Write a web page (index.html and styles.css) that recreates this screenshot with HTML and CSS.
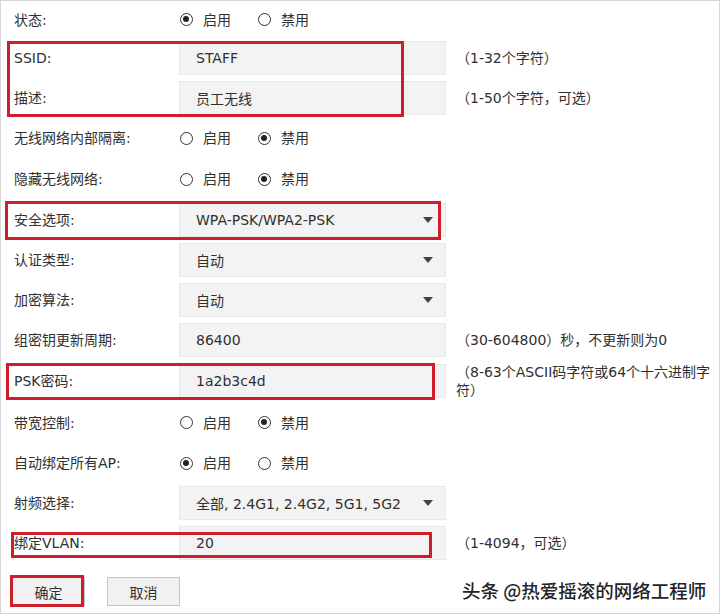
FILE: index.html
```html
<!DOCTYPE html>
<html lang="zh-CN">
<head>
<meta charset="utf-8">
<title>无线网络设置</title>
<link rel="stylesheet" href="styles.css">
</head>
<body>
<div class="page">
  <div class="form">
    <div class="row row-first">
      <div class="label">状态:</div>
      <div class="radios">
        <span class="radio on"></span><span class="opt">启用</span>
        <span class="radio"></span><span class="opt">禁用</span>
      </div>
    </div>
    <div class="row">
      <div class="label">SSID:</div>
      <div class="field">STAFF</div>
      <div class="hint">（1-32个字符）</div>
    </div>
    <div class="row">
      <div class="label">描述:</div>
      <div class="field">员工无线</div>
      <div class="hint">（1-50个字符，可选）</div>
    </div>
    <div class="row">
      <div class="label">无线网络内部隔离:</div>
      <div class="radios">
        <span class="radio"></span><span class="opt">启用</span>
        <span class="radio on"></span><span class="opt">禁用</span>
      </div>
    </div>
    <div class="row row-tall">
      <div class="label">隐藏无线网络:</div>
      <div class="radios">
        <span class="radio"></span><span class="opt">启用</span>
        <span class="radio on"></span><span class="opt">禁用</span>
      </div>
    </div>
    <div class="row">
      <div class="label">安全选项:</div>
      <div class="field select">WPA-PSK/WPA2-PSK<svg class="caret" width="10" height="6" viewBox="0 0 10 6"><path d="M0 0H10L5 6Z"/></svg></div>
    </div>
    <div class="row">
      <div class="label">认证类型:</div>
      <div class="field select">自动<svg class="caret" width="10" height="6" viewBox="0 0 10 6"><path d="M0 0H10L5 6Z"/></svg></div>
    </div>
    <div class="row">
      <div class="label">加密算法:</div>
      <div class="field select">自动<svg class="caret" width="10" height="6" viewBox="0 0 10 6"><path d="M0 0H10L5 6Z"/></svg></div>
    </div>
    <div class="row">
      <div class="label">组密钥更新周期:</div>
      <div class="field">86400</div>
      <div class="hint">（30-604800）秒，不更新则为0</div>
    </div>
    <div class="row row-tall">
      <div class="label">PSK密码:</div>
      <div class="field">1a2b3c4d</div>
      <div class="hint hint-wrap">（8-63个ASCII码字符或64个十六进制字符）</div>
    </div>
    <div class="row row-mid">
      <div class="label">带宽控制:</div>
      <div class="radios">
        <span class="radio"></span><span class="opt">启用</span>
        <span class="radio on"></span><span class="opt">禁用</span>
      </div>
    </div>
    <div class="row">
      <div class="label">自动绑定所有AP:</div>
      <div class="radios">
        <span class="radio on"></span><span class="opt">启用</span>
        <span class="radio"></span><span class="opt">禁用</span>
      </div>
    </div>
    <div class="row">
      <div class="label">射频选择:</div>
      <div class="field select">全部, 2.4G1, 2.4G2, 5G1, 5G2<svg class="caret" width="10" height="6" viewBox="0 0 10 6"><path d="M0 0H10L5 6Z"/></svg></div>
    </div>
    <div class="row">
      <div class="label">绑定VLAN:</div>
      <div class="field">20</div>
      <div class="hint">（1-4094，可选）</div>
    </div>
  </div>
  <div class="actions">
    <button class="btn btn-ok">确定</button>
    <button class="btn btn-cancel">取消</button>
  </div>

  <div class="mark mark-ssid"></div>
  <div class="mark mark-sec"></div>
  <div class="mark mark-psk"></div>
  <div class="mark mark-vlan"></div>
  <div class="mark mark-ok"></div>

  <div class="watermark">头条 @热爱摇滚的网络工程师</div>
</div>
</body>
</html>
```
FILE: styles.css
```css
* { box-sizing: border-box; }
html, body {
  margin: 0;
  padding: 0;
  background: #fff;
}
.page {
  position: relative;
  width: 720px;
  height: 614px;
  overflow: hidden;
  box-shadow: inset 0 0 0 1px #d6d6d6;
  font-family: "DejaVu Sans", "Noto Sans CJK SC", sans-serif;
  font-size: 14px;
  color: #303030;
  text-spacing-trim: space-all;
}
.form {
  padding: 1px 0 0 14px;
}
.row {
  display: grid;
  grid-template-columns: 165px 267px 1fr;
  align-items: center;
  height: 40px;
}
.row-first { height: 37px; }
.row-tall { height: 42px; }
.row-mid { height: 41px; }
.label {
  white-space: nowrap;
  line-height: 18px;
}
.radios {
  display: flex;
  align-items: center;
  line-height: 18px;
}
.radio {
  width: 13px;
  height: 13px;
  border: 1.5px solid #333;
  border-radius: 50%;
  position: relative;
  margin-left: 1px;
  flex: none;
}
.radio.on::after {
  content: "";
  position: absolute;
  left: 2px;
  top: 2px;
  width: 6px;
  height: 6px;
  border-radius: 50%;
  background: #222;
}
.opt {
  margin-left: 10px;
  margin-right: 26px;
}
.field {
  height: 34px;
  background: #f3f3f3;
  border: 1px solid #e8e8e8;
  padding-left: 16px;
  display: flex;
  align-items: center;
  white-space: nowrap;
}
.select {
  justify-content: space-between;
  padding-right: 12px;
}
.caret { fill: #444; flex: none; }
.hint {
  line-height: 18px;
  margin-left: 10px;
}
.hint-wrap {
  width: 260px;
}
.actions {
  display: flex;
  gap: 22px;
  padding: 14px 0 0 12px;
}
.btn {
  width: 73px;
  height: 29px;
  background: #f1f1f1;
  border: 1px solid #c6c6c6;
  border-radius: 0;
  font: inherit;
  color: #303030;
  padding: 0;
}
.mark {
  position: absolute;
  border: 3px solid #cc1f2b;
}
.mark-ssid { left: 7px; top: 41px; width: 397px; height: 76px; }
.mark-sec { left: 5px; top: 201px; width: 436px; height: 39px; }
.mark-psk { left: 6px; top: 363px; width: 429px; height: 37px; }
.mark-vlan { left: 11px; top: 532px; width: 421px; height: 26px; }
.mark-ok { left: 10px; top: 575px; width: 74px; height: 32px; }
.watermark {
  position: absolute;
  left: 462px;
  top: 577px;
  font-family: "Noto Sans CJK SC", sans-serif;
  font-size: 18.5px;
  font-weight: 500;
  line-height: 26px;
  color: #242424;
  white-space: nowrap;
  text-shadow: 0 0 2px #fff, 0 0 2px #fff;
}
```
